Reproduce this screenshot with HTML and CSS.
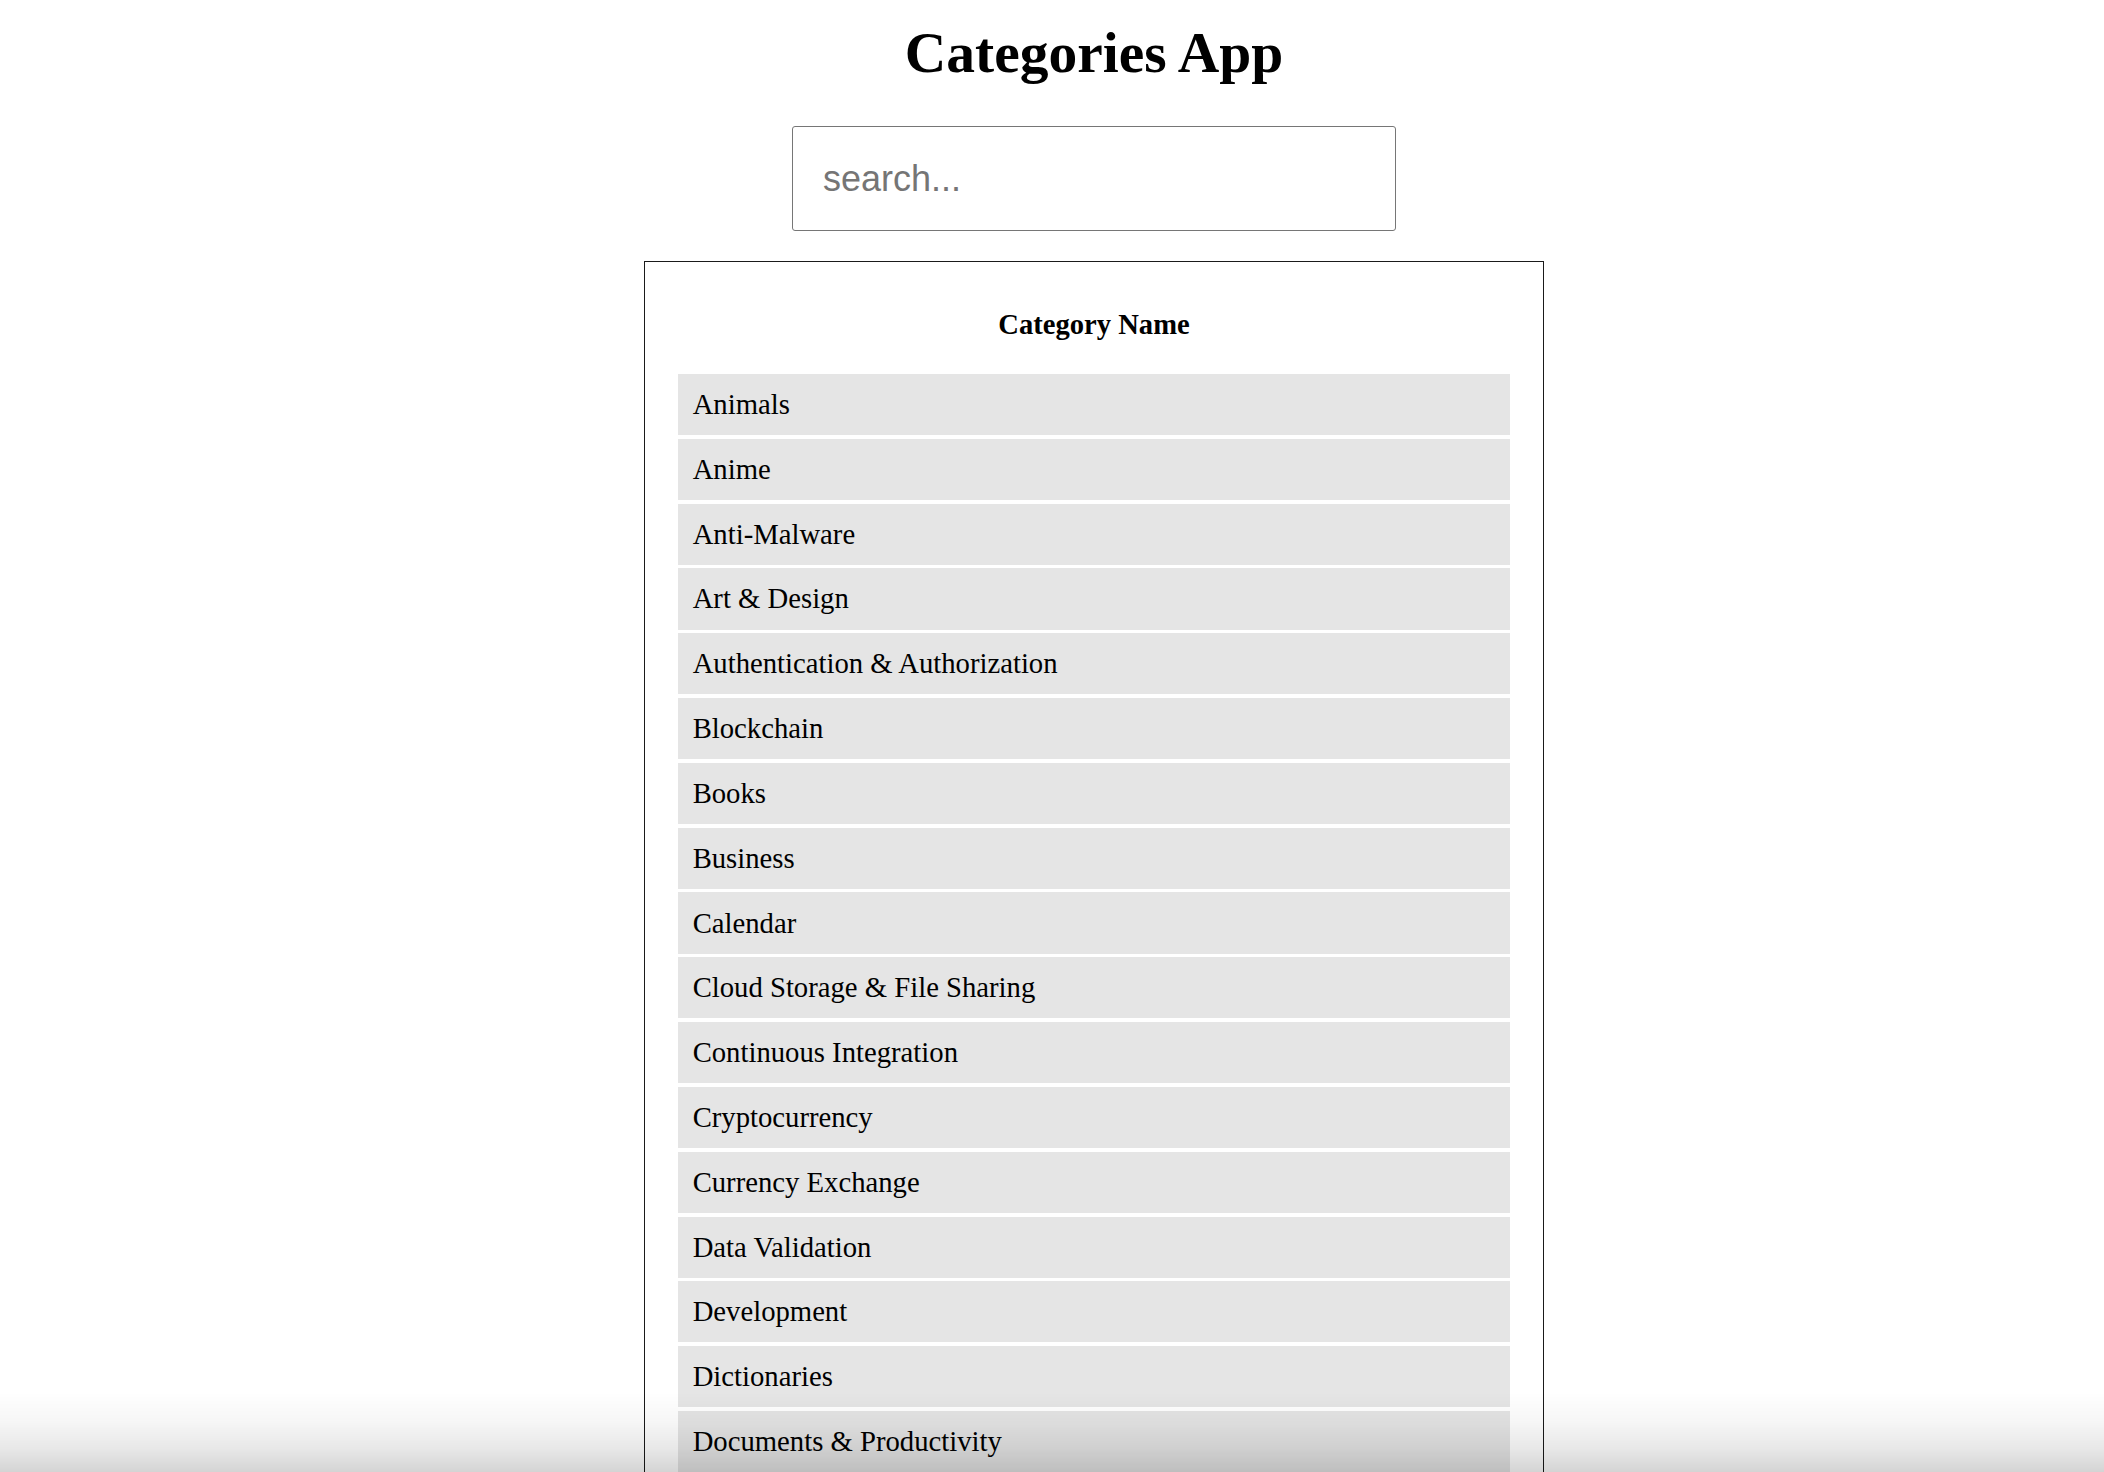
FILE: index.html
```html
<!DOCTYPE html>
<html lang="en">
<head>
<meta charset="utf-8">
<title>Categories App</title>
<link rel="stylesheet" href="styles.css">
</head>
<body>
<div class="app">
  <h1 class="title">Categories App</h1>
  <div class="search-row">
    <input class="search" type="text" placeholder="search...">
  </div>
  <div class="panel">
    <div class="list">
      <div class="list-head">Category Name</div>
      <div class="item">Animals</div>
      <div class="item">Anime</div>
      <div class="item">Anti-Malware</div>
      <div class="item">Art &amp; Design</div>
      <div class="item">Authentication &amp; Authorization</div>
      <div class="item">Blockchain</div>
      <div class="item">Books</div>
      <div class="item">Business</div>
      <div class="item">Calendar</div>
      <div class="item">Cloud Storage &amp; File Sharing</div>
      <div class="item">Continuous Integration</div>
      <div class="item">Cryptocurrency</div>
      <div class="item">Currency Exchange</div>
      <div class="item">Data Validation</div>
      <div class="item">Development</div>
      <div class="item">Dictionaries</div>
      <div class="item">Documents &amp; Productivity</div>
      <div class="item">Email</div>
      <div class="item">Entertainment</div>
      <div class="item">Environment</div>
      <div class="item">Events</div>
      <div class="item">Finance</div>
      <div class="item">Food &amp; Drink</div>
      <div class="item">Games &amp; Comics</div>
      <div class="item">Geocoding</div>
      <div class="item">Government</div>
      <div class="item">Health</div>
    </div>
  </div>
</div>
<div class="bottom-fade"></div>
</body>
</html>
```

FILE: styles.css
```css
html, body {
  margin: 0;
  padding: 0;
  background: #ffffff;
}

body {
  font-family: "Liberation Serif", "Times New Roman", serif;
  color: #000000;
}

.app {
  padding: 20px 0 40px 84px;
}

.title {
  margin: 0;
  font-size: 57.5px;
  line-height: 66px;
  font-weight: bold;
  text-align: center;
}

.search-row {
  display: flex;
  justify-content: center;
  margin-top: 39.5px;
}

.search {
  box-sizing: border-box;
  width: 604px;
  height: 105px;
  padding: 2px 30px 0;
  border: 1px solid #767676;
  border-radius: 3px;
  font-family: "Liberation Sans", Arial, sans-serif;
  font-size: 36px;
  color: #000;
  outline: none;
  background: #fff;
}

.search::placeholder {
  color: #757575;
}

.panel {
  box-sizing: border-box;
  width: 900px;
  margin: 30.5px auto 0;
  border: 1px solid #1a1a1a;
  padding: 29.33px;
}

.list {
  display: flex;
  flex-direction: column;
  gap: 3.67px;
  padding: 3.67px;
}

.list-head {
  font-weight: bold;
  font-size: 28.6px;
  line-height: 33px;
  text-align: center;
  padding: 13.3px 0 29px;
}

.item {
  background: #e5e5e5;
  font-size: 28.7px;
  line-height: 33px;
  padding: 14.08px 14.67px;
}

.bottom-fade {
  position: fixed;
  left: 0;
  right: 0;
  bottom: 0;
  height: 80px;
  pointer-events: none;
  background: linear-gradient(to bottom, rgba(0,0,0,0) 0%, rgba(0,0,0,0.03) 35%, rgba(0,0,0,0.09) 70%, rgba(0,0,0,0.17) 100%);
}
```
